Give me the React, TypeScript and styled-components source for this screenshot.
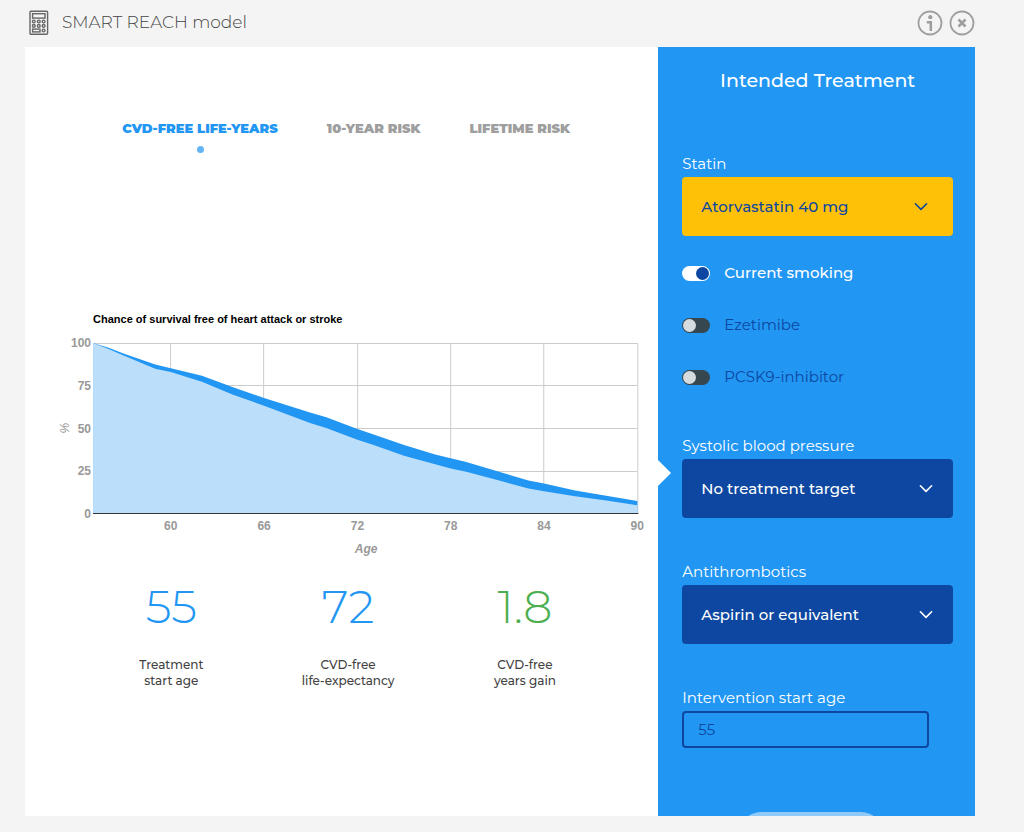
import React, { useState } from "react";
import styled, { createGlobalStyle } from "styled-components";

const colors = {
  page: "#f4f4f4",
  blue: "#2196f3",
  navy: "#0d47a1",
  amber: "#ffc107",
  grey: "#9e9e9e",
  green: "#4caf50",
};

const GlobalStyle = createGlobalStyle`
  * { box-sizing: border-box; }
  body {
    margin: 0;
    background: ${colors.page};
    font-family: Montserrat, Inter, sans-serif;
  }
  button, input, select { font-family: inherit; }
`;

const Page = styled.div`
  height: 100vh;
  display: flex;
  flex-direction: column;
  padding: 0 49px 16px 25px;
`;

const Header = styled.header`
  display: flex;
  align-items: center;
  gap: 12px;
  height: 47px;
  padding: 0 0 2px 3px;
  flex: none;
`;

const Title = styled.h1`
  margin: 0;
  flex: 1;
  font-size: 17px;
  line-height: 24px;
  font-weight: 300;
  color: #444;
  padding-bottom: 2px;
`;

const HeaderActions = styled.div`
  display: flex;
  gap: 6px;
`;

const IconButton = styled.button`
  display: flex;
  padding: 0;
  border: 0;
  background: none;
  color: ${colors.grey};
  cursor: pointer;
`;

const Card = styled.main`
  flex: 1;
  min-height: 0;
  display: grid;
  grid-template-columns: 2fr 1fr;
  background: #fff;
`;

const Results = styled.section`
  min-width: 0;
  overflow: hidden;
`;

const Tabs = styled.nav`
  display: flex;
  justify-content: center;
  gap: 49px;
  padding: 72px 0 0 9px;
`;

const Tab = styled.button<{ $active: boolean }>`
  display: flex;
  flex-direction: column;
  align-items: center;
  gap: 8px;
  padding: 0;
  border: 0;
  background: none;
  font-size: 13px;
  line-height: 19px;
  font-weight: 900;
  color: ${(p) => (p.$active ? colors.blue : colors.grey)};
  cursor: pointer;

  &::after {
    content: "";
    width: 7px;
    height: 7px;
    border-radius: 50%;
    background: ${(p) => (p.$active ? "#64b5f6" : "transparent")};
  }
`;

const Chart = styled.svg`
  display: block;
  width: 100%;
  margin-top: 147px;
  font-family: "Liberation Sans", Arial, sans-serif;
  font-size: 12px;
  font-weight: 700;
`;

const Stats = styled.div`
  display: grid;
  grid-template-columns: repeat(3, 1fr);
  padding: 11px 45px 0 58px;
`;

const Stat = styled.div`
  display: flex;
  flex-direction: column;
  align-items: center;
  gap: 24px;
  text-align: center;
`;

const StatValue = styled.div<{ $color: string }>`
  font-size: 46px;
  line-height: 52px;
  font-weight: 300;
  color: ${(p) => p.$color};
`;

const StatLabel = styled.div`
  font-size: 12px;
  line-height: 16px;
  font-weight: 500;
  color: #424242;
`;

const Panel = styled.aside`
  position: relative;
  min-height: 0;
  overflow: hidden;
  background: ${colors.blue};
  padding: 20px 22px 0 24px;
  color: #fff;

  &::before {
    content: "";
    position: absolute;
    left: 0;
    top: 413px;
    border: 13px solid transparent;
    border-left-color: #fff;
    border-right-width: 0;
  }
`;

const PanelTitle = styled.h2`
  margin: 0 0 57px;
  font-size: 19px;
  line-height: 28px;
  font-weight: 500;
  text-align: center;
`;

const Field = styled.div`
  margin-bottom: 42px;
`;

const FieldLabel = styled.label`
  display: block;
  margin-bottom: 1px;
  font-size: 15px;
  line-height: 24px;
  font-weight: 400;
`;

const SelectWrap = styled.div<{ $highlight?: boolean }>`
  position: relative;
  color: ${(p) => (p.$highlight ? colors.navy : "#fff")};

  svg {
    position: absolute;
    right: ${(p) => (p.$highlight ? "20px" : "15px")};
    top: 17px;
    pointer-events: none;
  }
`;

const Select = styled.select<{ $highlight?: boolean }>`
  appearance: none;
  display: block;
  width: 100%;
  height: 59px;
  padding: 0 48px 0 19px;
  border: 0;
  border-radius: 4px;
  background: ${(p) => (p.$highlight ? colors.amber : colors.navy)};
  color: inherit;
  font-size: 15px;
  font-weight: 500;
`;

const Toggles = styled.div`
  display: flex;
  flex-direction: column;
  gap: 28px;
  margin: -17px 0 45px;
`;

const ToggleLabel = styled.label<{ $on: boolean }>`
  display: flex;
  align-items: center;
  gap: 14px;
  font-size: 15px;
  line-height: 24px;
  font-weight: ${(p) => (p.$on ? 500 : 400)};
  color: ${(p) => (p.$on ? "#fff" : colors.navy)};
`;

const Switch = styled.input`
  appearance: none;
  display: flex;
  width: 28px;
  height: 15px;
  margin: 0;
  padding: 1px;
  border-radius: 8px;
  background: #37474f;

  &::before {
    content: "";
    width: 13px;
    height: 13px;
    border-radius: 50%;
    background: #d5dcdf;
  }

  &:checked {
    justify-content: flex-end;
    background: #fff;
  }

  &:checked::before {
    background: ${colors.navy};
  }
`;

const AgeInput = styled.input`
  display: block;
  width: 91%;
  height: 37px;
  padding: 0 14px;
  border: 2px solid ${colors.navy};
  border-radius: 4px;
  background: transparent;
  color: ${colors.navy};
  font-size: 15px;
`;

const Actions = styled.div`
  display: flex;
  justify-content: center;
  padding: 64px 14px 0 0;
`;

const SubmitButton = styled.button`
  width: 144px;
  height: 44px;
  border: 0;
  border-radius: 22px;
  background: #90caf9;
`;

function CalculatorIcon() {
  return (
    <svg width="22" height="26" viewBox="0 0 22 26" fill="none" stroke="#666" strokeWidth="1.4" aria-hidden="true">
      <rect x="2" y="1.2" width="17.6" height="23" rx="1" />
      <rect x="4.6" y="3.7" width="12.4" height="4.4" />
      <circle cx="5.8" cy="11.5" r="1.4" />
      <circle cx="10.8" cy="11.5" r="1.4" />
      <circle cx="15.6" cy="11.5" r="1.4" />
      <circle cx="5.8" cy="15.9" r="1.4" />
      <circle cx="10.8" cy="15.9" r="1.4" />
      <circle cx="15.6" cy="15.9" r="1.4" />
      <rect x="4.6" y="19.1" width="7.4" height="2.8" />
      <circle cx="15.6" cy="20.5" r="1.4" />
    </svg>
  );
}

function InfoIcon() {
  return (
    <svg width="26" height="26" viewBox="0 0 26 26" fill="none" stroke="currentColor" aria-hidden="true">
      <circle cx="13" cy="13" r="11.5" strokeWidth="1.8" />
      <circle cx="13.3" cy="7.2" r="2.1" fill="currentColor" stroke="none" />
      <path d="M9.8 12.3h4v8.7" strokeWidth="2.5" />
    </svg>
  );
}

function CloseIcon() {
  return (
    <svg width="26" height="26" viewBox="0 0 26 26" fill="none" stroke="currentColor" aria-hidden="true">
      <circle cx="13" cy="13" r="11.5" strokeWidth="1.8" />
      <path d="M9.5 9.5l7 7M16.5 9.5l-7 7" strokeWidth="2.5" />
    </svg>
  );
}

function Chevron() {
  return (
    <svg width="24" height="24" viewBox="0 0 24 24" fill="none" stroke="currentColor" strokeWidth="1.6" strokeLinecap="round" strokeLinejoin="round" aria-hidden="true">
      <path d="M6.4 9.8l5.6 5.6 5.6-5.6" />
    </svg>
  );
}

// [age, survival % with treatment, survival % without treatment]
const survival = [
  [55, 100, 100],
  [56, 97.2, 96.5],
  [57, 93.7, 92.6],
  [59, 87.4, 85],
  [60, 85.3, 83.1],
  [62, 80.8, 77.3],
  [64, 74.2, 69.7],
  [66, 67.9, 63.4],
  [69, 59.3, 53.1],
  [70, 56.6, 50.3],
  [72, 49.8, 43.5],
  [73, 46.7, 40.6],
  [75, 40.4, 34.1],
  [77, 34.9, 29.1],
  [78, 32.6, 26.7],
  [79, 30.4, 24.7],
  [81, 25, 19.9],
  [83, 19.7, 15],
  [84, 17.9, 13.3],
  [86, 13.8, 10.5],
  [88, 10.7, 8],
  [90, 7.6, 5.1],
];

const plot = { left: 68, right: 612, top: 43, bottom: 214 };
const xAt = (age: number) => plot.left + ((age - 55) / 35) * (plot.right - plot.left);
const yAt = (pct: number) => plot.bottom - (pct / 100) * (plot.bottom - plot.top);
const area = (column: number) =>
  [
    `${plot.left},${plot.bottom}`,
    ...survival.map((row) => `${xAt(row[0])},${yAt(row[column])}`),
    `${plot.right},${plot.bottom}`,
  ].join(" ");

function SurvivalChart() {
  return (
    <Chart viewBox="0 0 633 270" role="img" aria-label="Chance of survival by age">
      <text x={plot.left} y="23" fontSize="11" fill="#000">
        Chance of survival free of heart attack or stroke
      </text>
      <g stroke="#ccc">
        {[25, 50, 75, 100].map((pct) => {
          const y = Math.floor(yAt(pct)) + 0.5;
          return <line key={pct} x1={plot.left} x2={plot.right} y1={y} y2={y} />;
        })}
        {[60, 66, 72, 78, 84, 90].map((age) => {
          const x = Math.floor(xAt(age)) + 0.5;
          return <line key={age} x1={x} x2={x} y1={plot.top} y2={plot.bottom} />;
        })}
      </g>
      <polygon points={area(1)} fill={colors.blue} />
      <polygon points={area(2)} fill="#bbdefb" />
      <line x1={plot.left} x2={plot.right + 1} y1={plot.bottom - 0.5} y2={plot.bottom - 0.5} stroke="#333" />
      <g fill="#999">
        {[0, 25, 50, 75, 100].map((pct) => (
          <text key={pct} x={plot.left - 2} y={yAt(pct) + 4} textAnchor="end">
            {pct}
          </text>
        ))}
        {[60, 66, 72, 78, 84, 90].map((age) => (
          <text key={age} x={xAt(age)} y="230" textAnchor="middle">
            {age}
          </text>
        ))}
        <text x="341" y="253" textAnchor="middle" fontStyle="italic">
          Age
        </text>
        <text transform="translate(44 128) rotate(-90)" textAnchor="middle" fontStyle="italic" fontWeight="400">
          %
        </text>
      </g>
    </Chart>
  );
}

interface DropdownProps {
  id: string;
  label: string;
  options: string[];
  highlight?: boolean;
}

function Dropdown({ id, label, options, highlight }: DropdownProps) {
  return (
    <Field>
      <FieldLabel htmlFor={id}>{label}</FieldLabel>
      <SelectWrap $highlight={highlight}>
        <Select id={id} $highlight={highlight}>
          {options.map((option) => (
            <option key={option}>{option}</option>
          ))}
        </Select>
        <Chevron />
      </SelectWrap>
    </Field>
  );
}

function Toggle({ label, initial = false }: { label: string; initial?: boolean }) {
  const [on, setOn] = useState(initial);
  return (
    <ToggleLabel $on={on}>
      <Switch type="checkbox" checked={on} onChange={(e) => setOn(e.target.checked)} />
      {label}
    </ToggleLabel>
  );
}

const tabs = ["CVD-FREE LIFE-YEARS", "10-YEAR RISK", "LIFETIME RISK"];

const stats = [
  { value: "55", color: colors.blue, lines: ["Treatment", "start age"] },
  { value: "72", color: colors.blue, lines: ["CVD-free", "life-expectancy"] },
  { value: "1.8", color: colors.green, lines: ["CVD-free", "years gain"] },
];

export default function App() {
  const [tab, setTab] = useState(tabs[0]);
  return (
    <Page>
      <GlobalStyle />
      <Header>
        <CalculatorIcon />
        <Title>SMART REACH model</Title>
        <HeaderActions>
          <IconButton aria-label="Information">
            <InfoIcon />
          </IconButton>
          <IconButton aria-label="Close">
            <CloseIcon />
          </IconButton>
        </HeaderActions>
      </Header>
      <Card>
        <Results>
          <Tabs>
            {tabs.map((name) => (
              <Tab key={name} $active={name === tab} onClick={() => setTab(name)}>
                {name}
              </Tab>
            ))}
          </Tabs>
          <SurvivalChart />
          <Stats>
            {stats.map((stat) => (
              <Stat key={stat.lines.join(" ")}>
                <StatValue $color={stat.color}>{stat.value}</StatValue>
                <StatLabel>
                  {stat.lines[0]}
                  <br />
                  {stat.lines[1]}
                </StatLabel>
              </Stat>
            ))}
          </Stats>
        </Results>
        <Panel>
          <PanelTitle>Intended Treatment</PanelTitle>
          <Dropdown id="statin" label="Statin" options={["Atorvastatin 40 mg"]} highlight />
          <Toggles>
            <Toggle label="Current smoking" initial />
            <Toggle label="Ezetimibe" />
            <Toggle label="PCSK9-inhibitor" />
          </Toggles>
          <Dropdown id="pressure" label="Systolic blood pressure" options={["No treatment target"]} />
          <Dropdown id="antithrombotics" label="Antithrombotics" options={["Aspirin or equivalent"]} />
          <FieldLabel htmlFor="age">Intervention start age</FieldLabel>
          <AgeInput id="age" type="text" inputMode="numeric" defaultValue="55" />
          <Actions>
            <SubmitButton aria-label="Calculate" />
          </Actions>
        </Panel>
      </Card>
    </Page>
  );
}
